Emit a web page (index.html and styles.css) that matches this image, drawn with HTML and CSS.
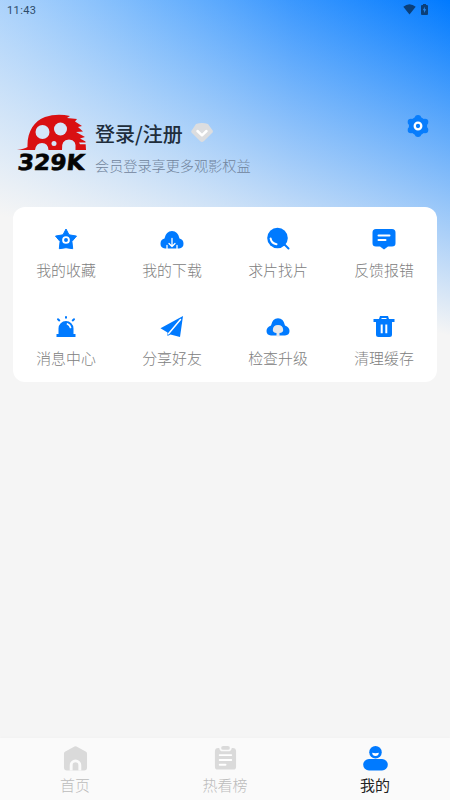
FILE: index.html
```html
<!DOCTYPE html>
<html lang="zh-CN">
<head>
<meta charset="utf-8">
<meta name="viewport" content="width=device-width, initial-scale=1">
<title>我的</title>
<link rel="stylesheet" href="styles.css">
</head>
<body>
<div class="app">
  <header class="status">
    <span class="time">11:43</span>
    <span class="indicators">
      <svg width="13" height="11" viewBox="0 0 13 11"><path d="M.3 2.8Q6.5-2.2 12.7 2.8L6.5 10.5Z"/></svg>
      <svg width="7" height="11" viewBox="0 0 7 11"><path d="M2 0h3v1h1q1 0 1 1v8q0 1-1 1H1q-1 0-1-1V2q0-1 1-1h1Z"/><path class="bolt" d="M3.8 2.8L1.8 6.3h1.3v2.6l2.1-3.6H3.8Z"/></svg>
    </span>
  </header>
  <section class="profile">
    <svg class="logo" width="72" height="60" viewBox="0 0 72 60">
      <path fill="#d91012" d="M1 36Q8 35 11.500 33C11 18 18 7 29 3Q41-1 54 2L51 4 61 5 59 7.500 66 12 62 13 67 17.500 60 18 69 23 64 24.500 69.500 27.500 70 36Z"/>
      <g class="hole"><circle cx="26.500" cy="18" r="7"/><circle cx="44.500" cy="15" r="6.500"/><circle cx="38" cy="29.500" r="2.500"/><path d="M19 36Q20 29 26 29T32.500 36ZM46 36Q45 25.500 53 25.500T59.500 36ZM63 28.500h7v1.700h-6Z"/></g>
      <text class="mark" transform="translate(1 56) skewX(-6)" textLength="67" lengthAdjust="spacingAndGlyphs">329K</text>
    </svg>
    <div class="account">
      <div class="login"><h1>登录/注册</h1>
        <svg width="24" height="20" viewBox="0 0 24 20"><path fill="#dcdddf" d="M6 1Q12-1 18 1L23 8Q23 10 21 11L14 18Q12 20 10 18L3 11Q0 9 2 7Z"/><path class="line" stroke-width="2.500" d="M7.500 8l4.500 4.300L16.500 8"/></svg>
      </div>
      <p>会员登录享更多观影权益</p>
    </div>
    <svg class="settings" width="24" height="24" viewBox="0 0 24 24"><g fill="#087dfc"><circle cx="12" cy="12" r="9.200"/><circle cx="12" cy="4.300" r="3.200"/><circle cx="19" cy="8" r="3.300"/><circle cx="19" cy="16" r="3.300"/><circle cx="12" cy="19.700" r="3.200"/><circle cx="5" cy="16" r="3.300"/><circle cx="5" cy="8" r="3.300"/></g><circle cx="12" cy="12" r="3.300" fill="none" stroke="#fff" stroke-width="2.300"/></svg>
  </section>
  <main class="card">
    <div class="item"><svg viewBox="0 0 24 24"><path class="solid" d="M12 2l3 5.800 7.500 1.300-4.600 5.400.8 7.200L12 20.700l-6.700 1 .8-7.200-4.600-5.400L9 7.800Z"/><circle class="line" cx="12" cy="13" r="2.900" stroke-width="1.900"/></svg><span>我的收藏</span></div>
    <div class="item"><svg viewBox="0 0 24 24"><path d="M5 21.500Q.5 21 .5 16.700.5 12.500 4.500 11.500 6 4 12 4t7.500 7.500q4 1 4 5.200 0 4.300-4.500 4.800Z"/><path class="line" stroke-width="1.300" d="M12 11.500v8M9 16.500l3 3 3-3M7 18.500v3M17 18.500v3"/></svg><span>我的下载</span></div>
    <div class="item"><svg viewBox="0 0 24 24"><circle cx="11.500" cy="11" r="10.300"/><path class="blue-line" d="M18 17l4.500 4.500"/><path class="line" stroke-width="2" d="M4.600 11.500Q5.500 16.500 10.500 17.200"/></svg><span>求片找片</span></div>
    <div class="item"><svg viewBox="0 0 24 24"><path d="M4 2h16q3.500 0 3.500 3.500v10.700q0 3.300-3.500 3.300h-4L12 22.500 8 19.500H4Q.5 19.500.5 16.200V5.500Q.5 2 4 2Z"/><path class="line" stroke-width="2" d="M6.500 8.500h11M6.500 13h7"/></svg><span>反馈报错</span></div>
    <div class="item"><svg viewBox="0 0 24 24"><path d="M4.500 19v-5.500a7.500 7.500 0 0 1 15 0V19h2v3h-19v-3Z"/><path class="blue-line" d="M12 2v.8M4 4.200l1.300 1.200M20 4.200l-1.300 1.200"/><path class="line" stroke-width="1.700" d="M13.500 9Q16 10 16.500 12.500"/></svg><span>消息中心</span></div>
    <div class="item"><svg viewBox="0 0 24 24"><path d="M23 1L.5 13.200 7.500 17.500V21l3-1.500L20 22Z"/><path class="line" stroke-width="1.500" d="M20.500 4.500L8.500 18.800"/></svg><span>分享好友</span></div>
    <div class="item"><svg viewBox="0 0 24 24"><path d="M5 20.500Q.5 20 .5 16 .5 12 5 10.500 6.500 3.200 12 3.200t7 7.300q4.500 1.500 4.500 5.500 0 4-4.500 4.500Z"/><path fill="#e7e8ea" d="M12 10q5 0 5.200 5 0 2.500-3.700 3v3.500h-3V18q-3.700-.5-3.700-3Q7 10 12 10Z"/></svg><span>检查升级</span></div>
    <div class="item"><svg viewBox="0 0 24 24"><path fill-rule="evenodd" d="M7 4L8 1h8l1 3h5.500v3H20v12.500q0 2.500-2.500 2.500h-11Q4 22 4 19.500V7H1.500V4ZM9.300 4h5.400L14.300 3H9.700ZM8.700 9.500v8.700h2V9.500ZM13.300 9.500v8.700h2V9.500Z"/></svg><span>清理缓存</span></div>
  </main>
  <nav class="tabs">
    <div class="tab"><svg viewBox="0 0 26 26"><path d="M11 1.500q2-1.500 4 0l9 5q1 .7 1 2V23q0 3-3 3H4q-3 0-3-3V8.500q0-1.300 1-2Z"/><path class="door" d="M8.500 26v-5.500a4.500 4.500 0 0 1 9 0V26"/></svg><span>首页</span></div>
    <div class="tab"><svg viewBox="0 0 26 26"><path d="M5.500 2.500h1Q7 6 10 6h6q3 0 3.500-3.500h1q3.500 0 3.500 3.500v16q0 3-3 3H5q-3 0-3-3V6q0-3.500 3.500-3.500Z"/><rect x="8.500" y=".5" width="9" height="4" rx="2"/><path class="line" stroke-width="2" d="M7 10h12M7 15h12M7 20h6"/></svg><span>热看榜</span></div>
    <div class="tab active"><svg viewBox="0 0 26 26"><circle cx="13" cy="7" r="6.500"/><rect x=".2" y="14" width="25.600" height="12" rx="6"/><path fill="#fff" d="M9.500 7.500q3.500 1 7 0-.4 3.300-3.500 3.300T9.500 7.500Z"/></svg><span>我的</span></div>
  </nav>
</div>
</body>
</html>
```
FILE: styles.css
```css
* { box-sizing: border-box; }
body { margin: 0; font-family: "Noto Sans CJK SC", sans-serif; }
.app {
  width: 450px;
  height: 800px;
  display: flex;
  flex-direction: column;
  background:
    linear-gradient(195deg, rgba(245,245,245,0), #f5f5f5 73%) 0 0 / 450px 340px no-repeat,
    linear-gradient(90deg, #82bfff, #4aa2ff 35%, #208aff 65%, #007aff) 0 0 / 450px 340px no-repeat,
    #f5f5f5;
}
svg { display: block; flex: none; }
h1, p { margin: 0; }
.line { fill: none; stroke: #fff; stroke-linecap: round; stroke-linejoin: round; }
.status {
  height: 20px;
  display: flex;
  justify-content: space-between;
  padding: 0 22px 0 7px;
}
.time { font: 400 11px/21px Roboto, sans-serif; letter-spacing: .4px; color: #2d4b69; }
.indicators { display: flex; gap: 5px; align-items: center; padding-bottom: 2px; fill: #0b3f79; }
.bolt { fill: #2688ee; }
.profile { display: flex; height: 187px; padding: 94px 20px 0 16px; }
.logo { margin-right: 7px; }
.hole { fill: #d5e7fa; }
.mark { font: 700 22px "DejaVu Sans", sans-serif; fill: #050505; stroke: #050505; stroke-width: .6px; }
.account { flex: 1; padding-top: 7px; }
.login { display: flex; align-items: center; gap: 7px; height: 26px; }
.login svg { margin-top: -2px; }
h1 { font-size: 20px; line-height: 26px; font-weight: 500; color: #202d3b; }
.account p { font-size: 14.150px; line-height: 20px; margin-top: 8px; color: #71849c; font-weight: 300; }
.card {
  width: 424px;
  height: 175px;
  margin-left: 13px;
  padding-top: 20px;
  display: grid;
  grid-template-columns: repeat(4, 1fr);
  grid-template-rows: 87.500px 67px;
  border-radius: 12px;
  background: #fff;
}
.item { display: flex; flex-direction: column; align-items: center; gap: 8px; }
.item svg { width: 24px; height: 24px; fill: #007aff; }
.item span { font-size: 14.900px; line-height: 22px; color: #808080; font-weight: 300; }
.solid { stroke: #007aff; stroke-linejoin: round; }
.blue-line { stroke: #007aff; stroke-width: 2; stroke-linecap: round; }
.door { fill: none; stroke: #fafafa; stroke-width: 3; }
.tabs {
  margin-top: auto;
  height: 62px;
  padding-top: 7px;
  display: grid;
  grid-template-columns: repeat(3, 1fr);
  background: #fafafa;
  box-shadow: 0 -1px 3px rgba(0,0,0,.015);
}
.tab { display: flex; flex-direction: column; align-items: center; gap: 3px; color: #bcbcbc; fill: #dadada; font-size: 15px; line-height: 22px; font-weight: 300; }
.tab svg { width: 25px; height: 26px; }
.active { color: #222; fill: #007aff; font-weight: 400; }
```
